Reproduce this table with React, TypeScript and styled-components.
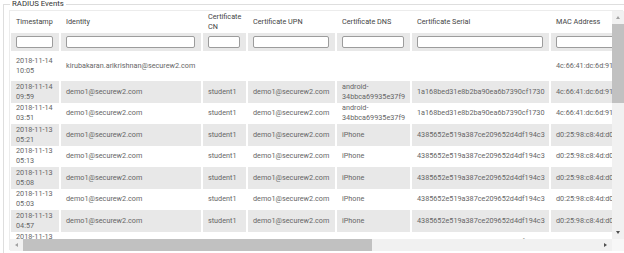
import React from 'react';
import styled, { createGlobalStyle } from 'styled-components';

const GlobalStyle = createGlobalStyle`
  html, body {
    margin: 0;
    padding: 0;
    background: #ffffff;
    overflow: hidden;
  }
  body {
    font-family: Roboto, "Liberation Sans", Arial, sans-serif;
    -webkit-font-smoothing: antialiased;
  }
`;

type Tone = 'plain' | 'band';

const Page = styled.div`
  width: 624px;
  height: 253px;
  overflow: hidden;
  padding-left: 3px;
  box-sizing: border-box;
`;

const Fieldset = styled.fieldset`
  margin: 0;
  min-inline-size: 0;
  border: 1px solid #dedede;
  padding: 3px 6px 6px 6px;
  width: max-content;
`;

const Legend = styled.legend`
  padding: 0 2px;
  font-size: 7.8px;
  line-height: 8px;
  color: #333333;
`;

const Panel = styled.div`
  width: 614px;
  height: 240px;
  display: grid;
  grid-template-columns: 602px 12px;
  grid-template-rows: 228px 12px;
  box-shadow: -1px -1px 0 0 #ececec;
  background: #ffffff;
`;

const Viewport = styled.div`
  overflow: hidden;
  background: #ffffff;
`;

const Table = styled.div`
  display: flex;
  flex-direction: column;
  width: max-content;
  font-size: 7.25px;
  line-height: 10px;
`;

const Row = styled.div<{ $height: number }>`
  display: grid;
  grid-template-columns: 48px 140px 43px 87px 73px 137px 100px;
  column-gap: 2px;
  padding-left: 1px;
  height: ${p => p.$height}px;
  background: #ffffff;
`;

const Cell = styled.div<{ $tone: Tone; $wrap?: boolean }>`
  display: flex;
  align-items: center;
  padding: 0 4px 0 5px;
  background: ${p => (p.$tone === 'band' ? '#e8e8e8' : '#ffffff')};
  color: #666666;
  white-space: ${p => (p.$wrap ? 'normal' : 'nowrap')};
  min-width: 0;
`;

const HeadCell = styled.div`
  display: flex;
  align-items: center;
  padding: 0 2px 0 5px;
  color: #444444;
  background: #ffffff;
`;

const FilterCell = styled.div`
  display: flex;
  align-items: center;
  padding: 0 6px 0 5px;
  background: #e8e8e8;
`;

const FilterInput = styled.input`
  width: 100%;
  height: 12px;
  box-sizing: border-box;
  margin: 0;
  padding: 0 2px;
  border: 1px solid #9c9c9c;
  border-radius: 2px;
  background: #ffffff;
  font: inherit;
  outline: none;
`;

const Stack = styled.div`
  display: flex;
  flex-direction: column;
`;

const VBar = styled.div`
  display: flex;
  flex-direction: column;
  background: #f1f1f1;
`;

const HBar = styled.div`
  display: flex;
  flex-direction: row;
  background: #f1f1f1;
`;

const Corner = styled.div`
  background: #f7f7f7;
`;

const BarButton = styled.div<{ $vertical: boolean }>`
  flex: none;
  width: ${p => (p.$vertical ? '12px' : '13px')};
  height: ${p => (p.$vertical ? '13px' : '12px')};
  display: flex;
  align-items: center;
  justify-content: center;
`;

const Thumb = styled.div<{ $vertical: boolean; $size: number }>`
  flex: none;
  background: #c1c1c1;
  width: ${p => (p.$vertical ? '12px' : `${p.$size}px`)};
  height: ${p => (p.$vertical ? `${p.$size}px` : '12px')};
`;

const Spacer = styled.div`
  flex: 1;
`;

type Dir = 'up' | 'down' | 'left' | 'right';

const Arrow = styled.span<{ $dir: Dir; $disabled?: boolean }>`
  width: 0;
  height: 0;
  ${p => {
    const c = p.$disabled ? '#a3a3a3' : '#505050';
    switch (p.$dir) {
      case 'up':
        return `border-left: 2.5px solid transparent; border-right: 2.5px solid transparent; border-bottom: 3px solid ${c};`;
      case 'down':
        return `border-left: 2.5px solid transparent; border-right: 2.5px solid transparent; border-top: 3px solid ${c};`;
      case 'left':
        return `border-top: 2.5px solid transparent; border-bottom: 2.5px solid transparent; border-right: 3px solid ${c};`;
      default:
        return `border-top: 2.5px solid transparent; border-bottom: 2.5px solid transparent; border-left: 3px solid ${c};`;
    }
  }}
`;

const headers = [
  'Timestamp',
  'Identity',
  'Certificate CN',
  'Certificate UPN',
  'Certificate DNS',
  'Certificate Serial',
  'MAC Address',
];

type EventRow = {
  date: string;
  time: string;
  identity: string;
  cn: string;
  upn: string;
  dns: string;
  serial: string;
  mac: string;
};

const android = {
  identity: 'demo1@securew2.com',
  cn: 'student1',
  upn: 'demo1@securew2.com',
  dns: 'android-34bbca69935e37f9',
  serial: '1a168bed31e8b2ba90ea6b7390cf1730',
  mac: '4c:66:41:dc:6d:91',
};

const iphone = {
  identity: 'demo1@securew2.com',
  cn: 'student1',
  upn: 'demo1@securew2.com',
  dns: 'iPhone',
  serial: '4385652e519a387ce209652d4df194c3',
  mac: 'd0:25:98:c8:4d:d0',
};

const rows: EventRow[] = [
  {
    date: '2018-11-14',
    time: '10:05',
    identity: 'kirubakaran.arikrishnan@securew2.com',
    cn: '',
    upn: '',
    dns: '',
    serial: '',
    mac: '4c:66:41:dc:6d:91',
  },
  { date: '2018-11-14', time: '09:59', ...android },
  { date: '2018-11-14', time: '03:51', ...android },
  { date: '2018-11-13', time: '05:21', ...iphone },
  { date: '2018-11-13', time: '05:13', ...iphone },
  { date: '2018-11-13', time: '05:08', ...iphone },
  { date: '2018-11-13', time: '05:03', ...iphone },
  { date: '2018-11-13', time: '04:57', ...iphone },
  { date: '2018-11-13', time: '04:52', ...iphone },
];

const ScrollButton: React.FC<{ dir: Dir; disabled?: boolean }> = ({ dir, disabled }) => (
  <BarButton $vertical={dir === 'up' || dir === 'down'}>
    <Arrow $dir={dir} $disabled={disabled} />
  </BarButton>
);

export default function App() {
  return (
    <>
      <GlobalStyle />
      <Page>
        <Fieldset>
          <Legend>RADIUS Events</Legend>
          <Panel>
            <Viewport>
              <Table>
                <Row $height={22}>
                  {headers.map(h => (
                    <HeadCell key={h}>{h}</HeadCell>
                  ))}
                </Row>
                <Row $height={18}>
                  {headers.map(h => (
                    <FilterCell key={h}>
                      <FilterInput type="text" aria-label={h} />
                    </FilterCell>
                  ))}
                </Row>
                {rows.map((r, i) => {
                  const tone: Tone = i % 2 === 1 ? 'band' : 'plain';
                  return (
                    <Row key={i} $height={i === 0 ? 30 : 21.5}>
                      <Cell $tone={tone}>
                        <Stack>
                          <span>{r.date}</span>
                          <span>{r.time}</span>
                        </Stack>
                      </Cell>
                      <Cell $tone={tone}>{r.identity}</Cell>
                      <Cell $tone={tone}>{r.cn}</Cell>
                      <Cell $tone={tone}>{r.upn}</Cell>
                      <Cell $tone={tone} $wrap>
                        {r.dns}
                      </Cell>
                      <Cell $tone={tone}>{r.serial}</Cell>
                      <Cell $tone={tone}>{r.mac}</Cell>
                    </Row>
                  );
                })}
              </Table>
            </Viewport>
            <VBar>
              <ScrollButton dir="up" disabled />
              <Thumb $vertical $size={79} />
              <Spacer />
              <ScrollButton dir="down" />
            </VBar>
            <HBar>
              <ScrollButton dir="left" disabled />
              <Thumb $vertical={false} $size={349} />
              <Spacer />
              <ScrollButton dir="right" />
            </HBar>
            <Corner />
          </Panel>
        </Fieldset>
      </Page>
    </>
  );
}
